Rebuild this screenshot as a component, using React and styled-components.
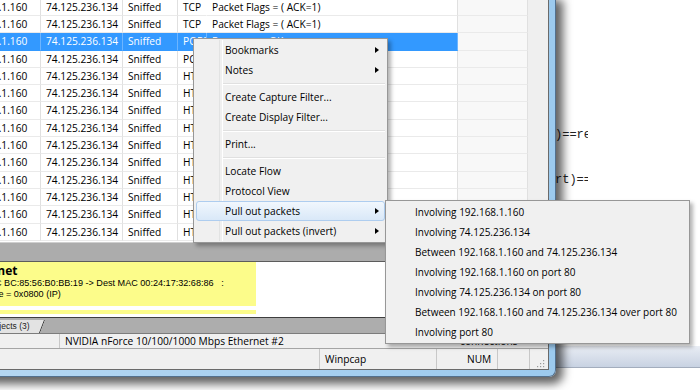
import React from 'react';
import styled, { createGlobalStyle } from 'styled-components';

const GlobalStyle = createGlobalStyle`
  html, body { margin: 0; padding: 0; background: #ffffff; }
  body { font-family: 'Open Sans', 'Noto Sans', sans-serif; font-size: 10.2px; color: #000; }
  * { box-sizing: border-box; }
`;

const Desktop = styled.div`
  position: relative;
  width: 700px;
  height: 390px;
  overflow: hidden;
  background: #fff;
`;

/* window behind, with some source code in it */
const BackWindow = styled.div`
  position: absolute;
  left: 540px;
  top: -10px;
  width: 200px;
  height: 378px;
  display: flex;
  flex-direction: column;
`;

const BackClient = styled.div`
  flex: 1;
  background: #fff;
  padding: 137.5px 0 0 15px;
`;

const CodeArea = styled.div`
  width: 33px;
  overflow: hidden;
  font-family: 'Liberation Mono', 'DejaVu Sans Mono', monospace;
  font-size: 12px;
  line-height: 15px;
  white-space: pre;
  color: #222;
`;

const BackFrame = styled.div`
  height: 22px;
  background: linear-gradient(#e9edf4, #c8d2e2);
  border-bottom: 1px solid #a3adbd;
`;

/* main sniffer window */
const MainWindow = styled.div`
  position: absolute;
  left: -80px;
  top: -1.3px;
  width: 636px;
  height: 378.3px;
  padding: 0 6px 6px 0;
  background: linear-gradient(90deg, #b7d8f2, #9ccaee);
  border-right: 1px solid #52708e;
  border-bottom: 1px solid #52708e;
  border-radius: 0 0 7px 0;
  box-shadow: 4px 4px 10px 3px rgba(0, 0, 0, 0.62);
`;

const Client = styled.div`
  height: 100%;
  display: flex;
  flex-direction: column;
  background: #f0f0f0;
  border-right: 1px solid #6a6a6a;
  border-bottom: 1px solid #6a6a6a;
  overflow: hidden;
`;

const ListView = styled.div`
  height: 243.3px;
  flex: none;
  background: #fff;
  overflow: hidden;
`;

const Row = styled.div`
  display: grid;
  grid-template-columns: 41px 80px 82px 55px 29px 251px 70px 1fr;
  height: 17.3px;
`;

const Cell = styled.div`
  padding-left: ${p => (p.$pad !== undefined ? p.$pad : 5)}px;
  line-height: 16.3px;
  white-space: nowrap;
  overflow: hidden;
  border-bottom: 1px solid ${p => (p.$sel ? '#3399ff' : p.$filler ? '#efefef' : '#eaeaea')};
  border-right: 1px solid ${p => (p.$sel ? '#6db5ff' : p.$noRule ? 'transparent' : '#e0e0e0')};
  background: ${p => (p.$sel ? '#3399ff' : p.$filler ? '#efefef' : p.$gray ? '#f8f8f8' : '#fff')};
  color: ${p => (p.$sel ? '#fff' : '#000')};
`;

const Splitter = styled.div`
  height: 20px;
  flex: none;
  background: #acacac;
  border-top: 1px solid #cfcfcf;
  border-bottom: 1px solid #5c5c5c;
`;

const DetailPanel = styled.div`
  height: 55px;
  flex: none;
  background: #fff;
  overflow: hidden;
`;

const YellowBox = styled.div`
  width: 336px;
  height: ${p => p.$h}px;
  margin-bottom: 4px;
  background: #fcfc8a;
  padding-top: 2px;
`;

const DetailTitle = styled.div`
  padding-left: ${p => p.$indent}px;
  font-weight: 700;
  font-size: 12px;
  line-height: 14px;
  white-space: nowrap;
`;

const DetailLine = styled.div`
  padding-left: ${p => p.$indent}px;
  font-family: 'Liberation Sans', Arial, sans-serif;
  font-size: 9.1px;
  line-height: 11px;
  white-space: pre;
`;

const TabBar = styled.div`
  height: 16px;
  flex: none;
  background: #adadad;
  border-top: 1px solid #3e3e3e;
  padding-top: 2px;
  display: flex;
`;

const Tab = styled.div`
  position: relative;
  width: 125px;
  height: 13px;
  background: #e3e3e3;
  clip-path: polygon(0 0, 100% 0, calc(100% - 5px) 100%, 0 100%);
  padding-left: ${p => p.$indent}px;
  font-family: 'Liberation Sans', Arial, sans-serif;
  font-size: 8.5px;
  line-height: 13px;
  color: #222;
  white-space: nowrap;
`;

const TabEdge = styled.svg`
  position: absolute;
  right: 0;
  top: 0;
`;

const AdapterRow = styled.div`
  height: 15px;
  flex: none;
  display: flex;
  background: #f0f0f0;
  border-top: 1px solid #7c7c7c;
`;

const StatusCell = styled.div`
  width: ${p => p.$w}px;
  flex: ${p => (p.$w ? 'none' : '1')};
  padding-left: ${p => p.$pad || 0}px;
  padding-top: ${p => p.$top || 0}px;
  border-right: 1px solid ${p => (p.$line ? '#c8c8c8' : 'transparent')};
  white-space: nowrap;
  overflow: hidden;
  line-height: 14px;
  position: relative;
`;

const StatusBar = styled.div`
  height: 21px;
  flex: none;
  display: flex;
  background: #f0f0f0;
  border-top: 1px solid #a5a5a5;
`;

const Grip = styled.svg`
  position: absolute;
  right: 2px;
  bottom: 1px;
`;

/* context menus */
const Menu = styled.div`
  position: absolute;
  left: ${p => p.$x}px;
  top: ${p => p.$y}px;
  width: ${p => p.$w}px;
  padding: 1px 2px;
  background: #f0f0f0;
  border: 1px solid #979797;
  box-shadow: 3px 3px 4px rgba(0, 0, 0, 0.3);
  font-size: ${p => p.$fs}px;
  z-index: ${p => p.$z};

  &::before {
    content: '';
    display: ${p => (p.$gutter ? 'block' : 'none')};
    position: absolute;
    left: 25px;
    top: 1px;
    bottom: 1px;
    width: 2px;
    border-left: 1px solid #e2e3e3;
    border-right: 1px solid #ffffff;
  }
`;

const Item = styled.div`
  position: relative;
  height: 20px;
  display: flex;
  align-items: center;
  justify-content: space-between;
  padding: 0 5px 0 ${p => p.$pad}px;
  border: 1px solid ${p => (p.$active ? '#aecdef' : 'transparent')};
  border-radius: 3px;
  background: ${p => (p.$active ? 'linear-gradient(#f1f7fd, #d9e8f8)' : 'transparent')};
  white-space: nowrap;
`;

const Arrow = styled.span`
  width: 0;
  height: 0;
  border-left: 4px solid #000;
  border-top: 3.5px solid transparent;
  border-bottom: 3.5px solid transparent;
`;

const Separator = styled.div`
  height: 7px;
  margin-left: 26px;
  padding-top: 3px;
  &::after {
    content: '';
    display: block;
    border-top: 1px solid #e0e0e0;
    border-bottom: 1px solid #ffffff;
  }
`;

const rows = [
  ['1', '192.168.1.160', '74.125.236.134', 'Sniffed', 'TCP', 'Packet Flags = ( ACK=1)'],
  ['2', '192.168.1.160', '74.125.236.134', 'Sniffed', 'TCP', 'Packet Flags = ( ACK=1)'],
  ['3', '192.168.1.160', '74.125.236.134', 'Sniffed', 'POP3', 'Response: +OK'],
  ['4', '192.168.1.160', '74.125.236.134', 'Sniffed', 'POP3', 'Request: USER'],
  ['5', '192.168.1.160', '74.125.236.134', 'Sniffed', 'HTTP', 'GET / HTTP/1.1'],
  ['6', '192.168.1.160', '74.125.236.134', 'Sniffed', 'HTTP', 'HTTP/1.1 200 OK'],
  ['7', '192.168.1.160', '74.125.236.134', 'Sniffed', 'HTTP', 'GET /search HTTP/1.1'],
  ['8', '192.168.1.160', '74.125.236.134', 'Sniffed', 'HTTP', 'HTTP/1.1 200 OK'],
  ['9', '192.168.1.160', '74.125.236.134', 'Sniffed', 'HTTP', 'GET /images HTTP/1.1'],
  ['10', '192.168.1.160', '74.125.236.134', 'Sniffed', 'HTTP', 'HTTP/1.1 304'],
  ['11', '192.168.1.160', '74.125.236.134', 'Sniffed', 'HTTP', 'GET /favicon.ico'],
  ['12', '192.168.1.160', '74.125.236.134', 'Sniffed', 'HTTP', 'HTTP/1.1 200 OK'],
  ['13', '192.168.1.160', '74.125.236.134', 'Sniffed', 'HTTP', 'GET /logo.png'],
  ['14', '192.168.1.160', '74.125.236.134', 'Sniffed', 'HTTP', 'HTTP/1.1 200 OK'],
];

const menuItems = [
  { label: 'Bookmarks', sub: true },
  { label: 'Notes', sub: true },
  'sep',
  { label: 'Create Capture Filter...' },
  { label: 'Create Display Filter...' },
  'sep',
  { label: 'Print...' },
  'sep',
  { label: 'Locate Flow' },
  { label: 'Protocol View' },
  { label: 'Pull out packets', sub: true, active: true },
  { label: 'Pull out packets (invert)', sub: true },
];

const subItems = [
  'Involving 192.168.1.160',
  'Involving 74.125.236.134',
  'Between 192.168.1.160 and 74.125.236.134',
  'Involving 192.168.1.160 on port 80',
  'Involving 74.125.236.134 on port 80',
  'Between 192.168.1.160 and 74.125.236.134 over port 80',
  'Involving port 80',
];

const PacketRow = ({ cells, selected }) => (
  <Row>
    {cells.map((c, i) => (
      <Cell key={i} $sel={selected} $noRule={i === 4} $pad={i === 1 ? 0 : undefined}>
        {c}
      </Cell>
    ))}
    <Cell $gray />
    <Cell $filler $noRule />
  </Row>
);

const App = () => {
  return (
    <Desktop>
      <GlobalStyle />
      <BackWindow>
        <BackClient>
          <CodeArea>{')==remote\n\n\nrt)==port'}</CodeArea>
        </BackClient>
        <BackFrame />
      </BackWindow>

      <MainWindow>
        <Client>
          <ListView>
            {rows.map((r, i) => (
              <PacketRow key={i} cells={r} selected={i === 2} />
            ))}
          </ListView>
          <Splitter />
          <DetailPanel>
            <YellowBox $h={44}>
              <DetailTitle $indent={45}>Ethernet</DetailTitle>
              <DetailLine $indent={30}>{'Source MAC BC:85:56:B0:BB:19 -> Dest MAC 00:24:17:32:68:86   :'}</DetailLine>
              <DetailLine $indent={42}>EtherType = 0x0800 (IP)</DetailLine>
            </YellowBox>
            <YellowBox $h={4} />
          </DetailPanel>
          <TabBar>
            <Tab $indent={68}>
              Objects (3)
              <TabEdge width="6" height="13" viewBox="0 0 6 13">
                <line x1="5.5" y1="0" x2="0.5" y2="13" stroke="#333" strokeWidth="1" />
              </TabEdge>
            </Tab>
          </TabBar>
          <AdapterRow>
            <StatusCell $w={140} $line />
            <StatusCell $w={398} $pad={5}>NVIDIA nForce 10/100/1000 Mbps Ethernet #2</StatusCell>
            <StatusCell $pad={2}>connections</StatusCell>
          </AdapterRow>
          <StatusBar>
            <StatusCell $w={400} $line />
            <StatusCell $w={117} $pad={5} $top={3} $line>Winpcap</StatusCell>
            <StatusCell $w={61} $pad={30} $top={3} $line>NUM</StatusCell>
            <StatusCell $w={32} $line />
            <StatusCell>
              <Grip width="10" height="10" viewBox="0 0 10 10">
                {[[8, 2], [8, 5], [5, 5], [8, 8], [5, 8], [2, 8]].map(([x, y], i) => (
                  <rect key={i} x={x} y={y} width="1.2" height="1.2" fill="#9a9a9a" />
                ))}
              </Grip>
            </StatusCell>
          </StatusBar>
        </Client>
      </MainWindow>

      <Menu $x={193} $y={38} $w={195} $z={10} $fs={10.2} $gutter>
        {menuItems.map((m, i) =>
          m === 'sep' ? (
            <Separator key={i} />
          ) : (
            <Item key={i} $pad={28} $active={m.active}>
              <span>{m.label}</span>
              {m.sub && <Arrow />}
            </Item>
          )
        )}
      </Menu>

      <Menu $x={385} $y={200} $w={305} $z={11} $fs={10}>
        {subItems.map((s, i) => (
          <Item key={i} $pad={26}>
            <span>{s}</span>
          </Item>
        ))}
      </Menu>
    </Desktop>
  );
};

export default App;
